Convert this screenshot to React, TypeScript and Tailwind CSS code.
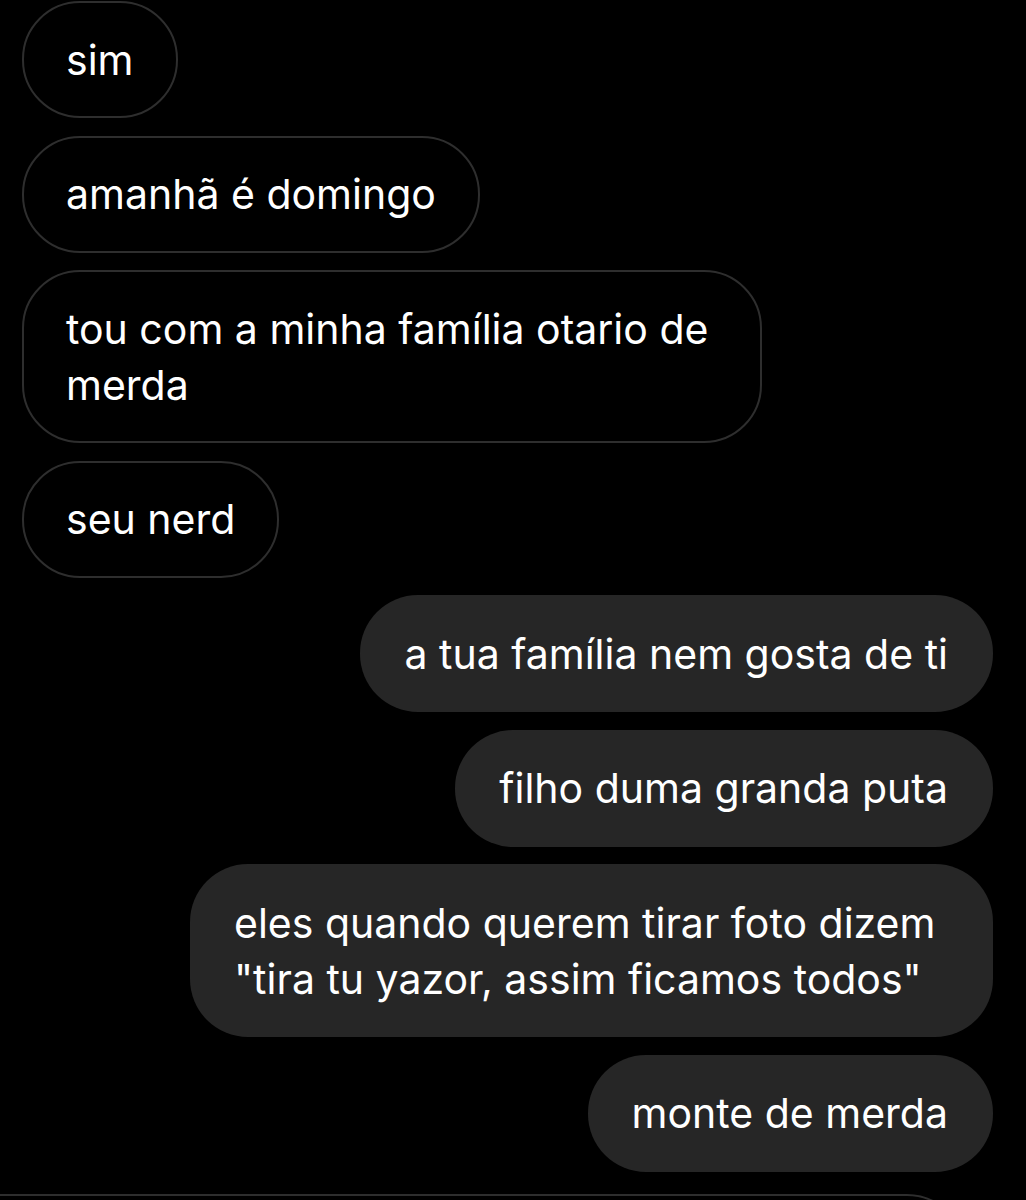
import React from "react";

const font = { fontFamily: 'Inter, "Noto Sans", "Liberation Sans", sans-serif' };

function Left({ children, w }: { children: React.ReactNode; w?: string }) {
  return (
    <div className="flex justify-start pl-[22px]">
      <div
        className={`rounded-[58px] border-2 border-[#2e2e2e] pl-[42px] pr-[42px] py-[28.5px] text-[41px] leading-[56px] text-white ${w ?? ""}`}
      >
        {children}
      </div>
    </div>
  );
}

function Right({ children, w }: { children: React.ReactNode; w?: string }) {
  return (
    <div className="flex justify-end pr-[33px]">
      <div
        className={`rounded-[58px] bg-[#262626] pl-[44px] pr-[45px] py-[30.5px] text-[41px] leading-[56px] text-white ${w ?? ""}`}
      >
        {children}
      </div>
    </div>
  );
}

export default function App() {
  return (
    <div className="h-[1200px] w-[1026px] overflow-hidden bg-black" style={font}>
      <div className="flex flex-col gap-[17.5px] pt-[1px]">
        <Left>sim</Left>
        <Left>amanhã é domingo</Left>
        <Left w="w-[740px]">
          tou com a minha família otario de
          <br />
          merda
        </Left>
        <Left>seu nerd</Left>
        <Right>a tua família nem gosta de ti</Right>
        <Right>filho duma granda puta</Right>
        <Right w="w-[803px]">
          eles quando querem tirar foto dizem
          <br />
          "tira tu yazor, assim ficamos todos"
        </Right>
        <Right>monte de merda</Right>
        <div className="ml-[-40px] mt-[5px] h-[80px] w-[1005px] rounded-tr-[58px] border-2 border-[#2e2e2e]" />
      </div>
    </div>
  );
}
